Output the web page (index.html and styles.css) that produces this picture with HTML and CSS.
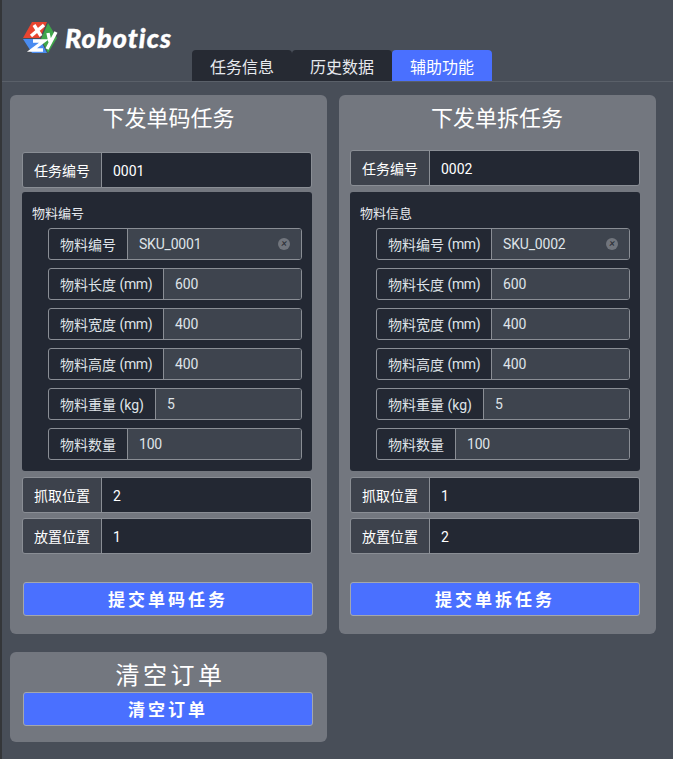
FILE: index.html
```html
<!DOCTYPE html>
<html lang="zh">
<head>
<meta charset="utf-8">
<title>Robotics</title>
<link rel="stylesheet" href="styles.css">
</head>
<body>
<div class="app">
  <header class="header">
    <div class="brand">
      <svg class="logo" width="36" height="33" viewBox="0 0 36 33">
        <polygon points="9,1 24,1 17,17 0,17" fill="#e8442f"/>
        <polygon points="25,2 34,17 25,32 18,18" fill="#3fa64a"/>
        <polygon points="0,18 17,18 24,32 9,32" fill="#4a8cf0"/>
        <g fill="none" stroke="#fff" stroke-width="3.4">
          <path d="M11 4 L18 15 M21 4 L8 15"/>
          <path d="M10 20 H21 L9 29 H20"/>
          <path d="M24 28 L33 11 M25 12 L27 21"/>
        </g>
      </svg>
      <span class="brand-name">Robotics</span>
    </div>
    <nav class="tabs">
      <span class="tab">任务信息</span>
      <span class="tab">历史数据</span>
      <span class="tab tab-active">辅助功能</span>
    </nav>
  </header>
  <main class="grid">
    <section class="card">
      <h2 class="card-title">下发单码任务</h2>
      <div class="group group-first"><span class="addon">任务编号</span><span class="value">0001</span></div>
      <div class="panel">
        <div class="panel-title">物料编号</div>
        <div class="row"><span class="row-label">物料编号</span><span class="row-value">SKU_0001<i class="clear"></i></span></div>
        <div class="row"><span class="row-label">物料长度&nbsp;<span class="unit">(mm)</span></span><span class="row-value">600</span></div>
        <div class="row"><span class="row-label">物料宽度&nbsp;<span class="unit">(mm)</span></span><span class="row-value">400</span></div>
        <div class="row"><span class="row-label">物料高度&nbsp;<span class="unit">(mm)</span></span><span class="row-value">400</span></div>
        <div class="row"><span class="row-label">物料重量&nbsp;(kg)</span><span class="row-value">5</span></div>
        <div class="row"><span class="row-label">物料数量</span><span class="row-value">100</span></div>
      </div>
      <div class="group"><span class="addon">抓取位置</span><span class="value">2</span></div>
      <div class="group"><span class="addon">放置位置</span><span class="value">1</span></div>
      <button class="btn btn-submit">提交单码任务</button>
    </section>
    <section class="card card-right">
      <h2 class="card-title">下发单拆任务</h2>
      <div class="group group-first-alt"><span class="addon">任务编号</span><span class="value">0002</span></div>
      <div class="panel">
        <div class="panel-title">物料信息</div>
        <div class="row"><span class="row-label">物料编号&nbsp;<span class="unit">(mm)</span></span><span class="row-value">SKU_0002<i class="clear"></i></span></div>
        <div class="row"><span class="row-label">物料长度&nbsp;<span class="unit">(mm)</span></span><span class="row-value">600</span></div>
        <div class="row"><span class="row-label">物料宽度&nbsp;<span class="unit">(mm)</span></span><span class="row-value">400</span></div>
        <div class="row"><span class="row-label">物料高度&nbsp;<span class="unit">(mm)</span></span><span class="row-value">400</span></div>
        <div class="row"><span class="row-label">物料重量&nbsp;(kg)</span><span class="row-value">5</span></div>
        <div class="row"><span class="row-label">物料数量</span><span class="row-value">100</span></div>
      </div>
      <div class="group"><span class="addon">抓取位置</span><span class="value">1</span></div>
      <div class="group"><span class="addon">放置位置</span><span class="value">2</span></div>
      <button class="btn btn-submit">提交单拆任务</button>
    </section>
    <section class="card card-clear">
      <h2 class="clear-title">清空订单</h2>
      <button class="btn btn-clear">清空订单</button>
    </section>
  </main>
</div>
</body>
</html>
```
FILE: styles.css
```css
* { box-sizing: border-box; }
html, body { margin: 0; height: 100%; }
body {
  background: #484e58;
  color: #fff;
  font-family: "Roboto", "Noto Sans CJK SC", sans-serif;
  font-size: 14px;
  overflow: hidden;
}
.app {
  height: 759px;
  border-left: 2px solid #343639;
}
.header {
  position: relative;
  height: 82px;
  border-bottom: 1px solid #5a6069;
}
.brand {
  position: absolute;
  left: 21px;
  top: 21px;
  display: flex;
  align-items: center;
  gap: 6px;
}
.logo { width: 36px; height: 33px; }
.brand-name {
  font-family: "Lato", sans-serif;
  font-weight: 900;
  font-style: italic;
  font-size: 27px;
  line-height: 33px;
  letter-spacing: 1.1px;
  -webkit-text-stroke: 0.4px #fff;
}
.tabs {
  position: absolute;
  left: 190px;
  top: 50px;
  display: flex;
}
.tab {
  width: 100px;
  height: 31px;
  display: flex;
  align-items: center;
  justify-content: center;
  background: #262a33;
  color: #e6e9ee;
  font-size: 16px;
  border-radius: 4px 4px 0 0;
}
.tab-active { background: #4a70ff; color: #fff; }
.grid {
  display: grid;
  grid-template-columns: 317px 317px;
  column-gap: 12px;
  row-gap: 18px;
  padding: 13px 0 0 8px;
  align-items: start;
}
.card {
  background: #73777f;
  border-radius: 6px;
  height: 539px;
  padding: 0 12px;
  display: flex;
  flex-direction: column;
}
.card-right { padding-left: 11px; }
.card-right .btn { margin-left: 0; }
.card-title {
  margin: 0;
  height: 46px;
  line-height: 48px;
  text-align: center;
  font-size: 22px;
  font-weight: 400;
  color: #fff;
}
.group {
  display: flex;
  width: 290px;
  height: 36px;
  margin-top: 5px;
  border: 1px solid #8a8e95;
  border-radius: 3px;
  overflow: hidden;
  flex: none;
}
.group-first { margin-top: 11px; }
.group-first-alt { margin-top: 9px; margin-bottom: 2px; }
.addon {
  width: 79px;
  background: #3d424c;
  border-right: 1px solid #8a8e95;
  display: flex;
  align-items: center;
  justify-content: center;
  font-size: 14px;
  padding-bottom: 1px;
  flex: none;
}
.value {
  flex: 1;
  background: #232833;
  padding: 1px 0 0 11px;
  display: flex;
  align-items: center;
}
.panel {
  width: 290px;
  height: 279px;
  margin-top: 4px;
  margin-bottom: 1px;
  background: #232833;
  border-radius: 3px;
  padding: 12px 10px 0 26px;
  flex: none;
}
.panel-title {
  margin-left: -16px;
  height: 24px;
  line-height: 19px;
  font-size: 13px;
  color: #e6e9ee;
}
.row {
  display: flex;
  width: 254px;
  height: 32px;
  margin-bottom: 8px;
  border: 1px solid #8a8e95;
  border-radius: 3px;
  overflow: hidden;
  color: #dfe3e8;
}
.row-label {
  padding: 0 11px 1px;
  border-right: 1px solid #8a8e95;
  display: flex;
  align-items: center;
  white-space: nowrap;
  flex: none;
}
.unit { letter-spacing: -0.4px; }
.row-value {
  flex: 1;
  background: #3e444e;
  padding: 0 11px;
  display: flex;
  align-items: center;
  justify-content: space-between;
  letter-spacing: -0.2px;
}
.clear {
  width: 12px;
  height: 12px;
  border-radius: 50%;
  background: #71757d;
  position: relative;
  margin-right: 0;
}
.clear::before {
  content: "×";
  position: absolute;
  left: 0;
  top: 0;
  width: 12px;
  height: 12px;
  line-height: 12px;
  text-align: center;
  font-size: 11px;
  color: #2b2f37;
}
.btn {
  width: 290px;
  background: #4a70ff;
  border: 1px solid #a3a7ad;
  border-radius: 3px;
  color: #fff;
  font-family: inherit;
  font-weight: 700;
  font-size: 17px;
  letter-spacing: 3px;
  height: 34px;
  padding: 0 0 2px;
  flex: none;
  margin-left: 1px;
}
.btn-submit { margin-top: 28px; }
.card-clear { height: 90px; }
.clear-title {
  margin: 6px 0 0;
  height: 34px;
  line-height: 36px;
  padding-left: 4px;
  text-align: center;
  font-size: 24px;
  font-weight: 400;
  letter-spacing: 3.5px;
}
```
